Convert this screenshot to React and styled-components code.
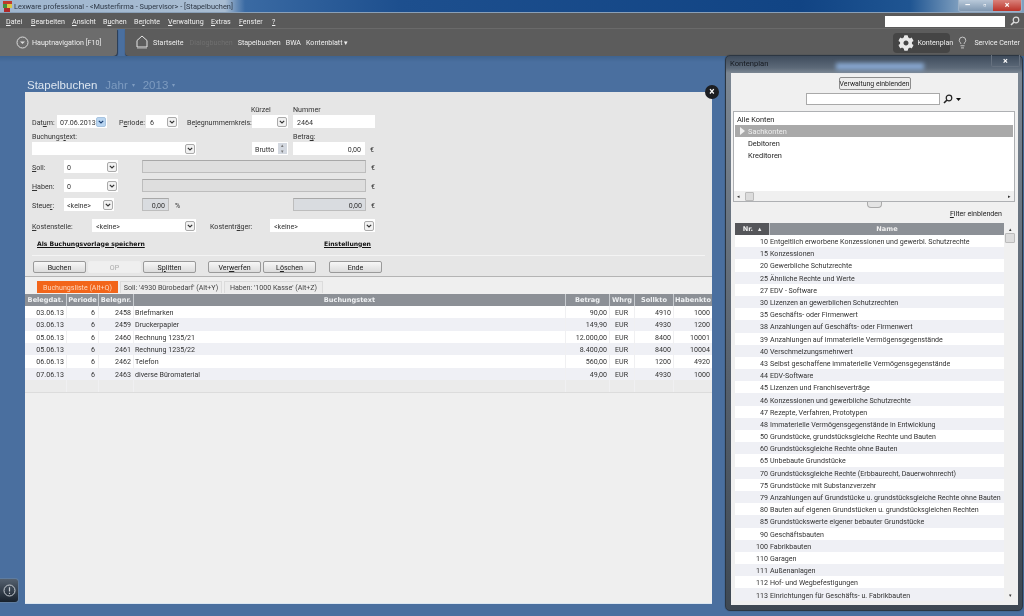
import React from "react";
import styled, { createGlobalStyle } from "styled-components";
import { Lightbulb } from "lucide-react";
import { FaCog } from "react-icons/fa";

const Global = createGlobalStyle`
  html, body { margin: 0; padding: 0; background: #4a6f9f; }
  body { font-family: Roboto, "Liberation Sans", Arial, sans-serif; font-size: 7.1px; color: #2b2b2b; }
  * { box-sizing: border-box; }
  u { text-decoration-thickness: 1px; text-underline-offset: 1px; }
`;

const Page = styled.div`
  position: relative; width: 1024px; height: 616px; overflow: hidden;
  display: flex; flex-direction: column; background: #4a6f9f; filter: blur(0.25px);
`;

/* ---------- Title bar ---------- */
const TitleBar = styled.div`
  height: 13px; flex: none; display: flex; align-items: center; padding-left: 3px; gap: 2px;
  background: linear-gradient(90deg, #9fb6cf 0, #a9bdd2 225px, #3a6aa3 245px, #1d4f8e 400px, #114484 800px, #1f5592 910px, #7f9fbf 960px);
  border-bottom: 1px solid #8aa0b8;
  font-size: 7.4px; color: #2d3745;
`;
const WindowControls = styled.div`
  margin-left: auto; margin-right: 2px; align-self: flex-start; width: 64px; height: 12px; display: flex;
  border-radius: 0 0 3px 3px; overflow: hidden; border: 1px solid #9db2c8; border-top: 0;
`;
const Ctl = styled.div`
  flex: ${p => p.$grow || 1}; display: flex; align-items: center; justify-content: center;
  background: ${p => p.$red ? "linear-gradient(#d9827b,#bb3228)" : "linear-gradient(#b9c9da,#7f97b0)"};
  color: #fff; font-size: 9px; font-weight: bold; line-height: 1;
`;

/* ---------- Menu ---------- */
const MenuBar = styled.div`
  height: 16px; flex: none; display: flex; align-items: center; padding: 1px 0 0 6px;
  background: #5a5a5a; color: #efefef; border-bottom: 1px solid #6a6a6a; position: relative;
`;
const MenuItem = styled.span`
  width: ${p => p.$w}px; flex: none; white-space: nowrap;
`;
const MenuSearch = styled.div`
  margin-left: auto; display: flex; align-items: center; gap: 5px; padding-right: 4px;
`;
const MenuSearchBox = styled.div`
  width: 120px; height: 11px; background: #fff;
`;

/* ---------- Toolbar ---------- */
const ToolBar = styled.div`
  height: 27px; flex: none; display: flex; gap: 8px; color: #eee; background: #4a6f9f;
`;
const NavPill = styled.div`
  width: 117px; display: flex; align-items: center; padding-left: 16px; gap: 3px;
  background: #6c6c6c; border-radius: 0 0 4px 0; box-shadow: 1px 1px 1px #2a3a50;
`;
const ToolStrip = styled.div`
  flex: 1; display: flex; align-items: center; padding-left: 11px; background: #5c5c5c;
  border-radius: 0 0 0 4px; box-shadow: 0 1px 1px #2a3a50;
`;
const ToolLink = styled.span`
  margin-left: ${p => p.$ml || 0}px; white-space: nowrap; color: ${p => p.$muted ? "#6f6f6f" : "#eee"};
`;
const KontenplanBtn = styled.div`
  margin-left: auto; width: 57px; height: 20px; display: flex; align-items: center; gap: 3px; padding-left: 5px; flex: none;
  background: #454545; border-radius: 4px; white-space: nowrap;
  svg { flex: none; }
`;
const ServiceLink = styled.div`
  display: flex; align-items: center; gap: 5px; margin: 0 4px 0 6px; white-space: nowrap;
  svg { flex: none; }
`;

/* ---------- Desktop ---------- */
const Desktop = styled.div`
  position: relative; flex: 1; padding: 21px 0 0 25px;
  background: linear-gradient(#3f638f 0, #4a6f9f 6px);
`;
const Heading = styled.div`
  height: 15px; padding-left: 2px; display: flex; align-items: center; gap: 8px;
  font-family: "Liberation Sans", Arial, sans-serif; font-size: 11.5px; color: #dde6f0;
`;
const HeadingMuted = styled.span`
  color: #7e9cc0; font-size: 11.5px; display: flex; gap: 4px; align-items: center;
`;
const Caret = styled.span`
  font-size: 6px;
`;
const Panel = styled.div`
  position: relative; width: 687px; height: 512px; background: #efefef;
  border-radius: 0 7px 0 0; border-bottom: 1px solid #dbe6f1;
  display: flex; flex-direction: column;
`;
const CloseRound = styled.div`
  position: absolute; top: -7px; right: -7px; width: 14px; height: 14px; border-radius: 50%;
  background: #1c1e22; color: #fff; font-size: 10px; font-weight: bold;
  display: flex; align-items: center; justify-content: center; line-height: 1;
`;

const Form = styled.div`
  background: #e6e6e6; padding: 11px 0 0 7px; height: 185px; border-radius: 0 7px 0 0;
  border-bottom: 1px solid #b4b4b4; flex: none;
`;
const Row = styled.div`
  display: flex; align-items: center; height: ${p => p.$h || 13}px; margin-top: ${p => p.$mt || 0}px;
`;
const Label = styled.span`
  flex: none; width: ${p => p.$w}px; margin-left: ${p => p.$ml || 0}px; padding-top: 1px; white-space: nowrap; color: #333;
`;
const InputBox = styled.div`
  flex: none; width: ${p => p.$w}px; height: 13px; margin-left: ${p => p.$ml || 0}px;
  display: flex; align-items: center; padding: ${p => p.$right ? "1px 3px 0 0" : "1px 0 0 3px"};
  justify-content: ${p => p.$right ? "flex-end" : "flex-start"};
  background: ${p => p.$gray ? (p.$blue ? "#d9dce0" : "#dedede") : "#fff"};
  border: 1px solid ${p => p.$gray ? "#bdbdbd" : "transparent"};
  border-top-color: ${p => p.$gray ? "#a8a8a8" : "transparent"};
  color: #333;
`;
const SelectBox = styled(InputBox)`
  justify-content: space-between; padding: 0 1px 0 ${p => p.$pad || 3}px; background: #fff; border: 0;
  span:first-child { padding-top: 1px; }
`;
const ArrowBtn = styled.span`
  flex: none; width: 10px; height: 10px; display: flex; align-items: center; justify-content: center;
  border: 1px solid ${p => p.$blue ? "#a8c4e0" : "#aaa"}; border-radius: 2px;
  background: ${p => p.$blue ? "#b9d5f0" : "#f1f1f1"};
`;
const Spinner = styled.span`
  flex: none; width: 9px; height: 11px; background: #d3d8e0; color: #777; font-size: 5px; line-height: 5.5px; text-align: center;
`;
const Currency = styled.span`
  flex: none; margin-left: ${p => p.$ml || 5}px; padding-top: 1px; color: #333; width: 6px;
`;
const LinkText = styled.span`
  flex: none; font-weight: bold; text-decoration: underline; color: #111; white-space: nowrap;
  font-family: "DejaVu Sans", sans-serif; font-size: 6.1px; margin-left: ${p => p.$ml || 0}px; width: ${p => p.$w}px;
`;
const Separator = styled.div`
  height: 1px; margin: 6px 7px 0 0; background: #f4f4f4;
`;
const ButtonRow = styled.div`
  display: flex; height: 12px; margin-top: 5px; padding-left: 1px;
`;
const Button = styled.div`
  flex: none; width: 53px; height: 12px; margin-left: ${p => p.$ml || 0}px; display: flex; align-items: center; justify-content: center;
  border: 1px solid ${p => p.$off ? "#eee" : "#9a9a9a"}; border-radius: 2px;
  background: ${p => p.$off ? "#efefef" : "linear-gradient(#f7f7f7,#dcdcdc)"};
  color: ${p => p.$off ? "#aaa" : "#222"};
`;

const Tabs = styled.div`
  display: flex; height: 12px; margin-top: 4px; padding-left: 12px; gap: 2px; flex: none;
`;
const Tab = styled.div`
  flex: none; width: ${p => p.$w}px; display: flex; align-items: center; justify-content: center; white-space: nowrap;
  background: ${p => p.$active ? "#f2651a" : "#ececec"}; color: ${p => p.$active ? "#ffd9bf" : "#444"};
  border: 1px solid ${p => p.$active ? "#f2651a" : "#dcdcdc"}; border-bottom: 0;
`;
const cols = "41px 32px 35px 432px 44px 25px 39px 39px";
const HeaderRow = styled.div`
  display: grid; grid-template-columns: ${cols}; height: 12px; margin-top: 1px; flex: none; background: #8c9096;
`;
const HeaderCell = styled.div`
  display: flex; align-items: center; justify-content: center; color: #eef0f2; font-weight: bold; white-space: nowrap;
  font-family: "DejaVu Sans", sans-serif; font-size: 6.6px; border-left: ${p => p.$first ? 0 : "1px solid #c8ccd0"};
  overflow: hidden;
`;
const DataRow = styled.div`
  display: grid; grid-template-columns: ${cols}; height: 12.33px; flex: none; background: ${p => p.$odd ? "#eff0f5" : "#fff"};
`;
const EmptyRow = styled(DataRow)`
  height: 13px; background: #ebebeb; border-bottom: 1px solid #dcdcdc;
`;
const Cell = styled.div`
  display: flex; align-items: center; white-space: nowrap; overflow: hidden; color: #333;
  justify-content: ${p => p.$left ? "flex-start" : "flex-end"};
  padding: ${p => p.$left ? `1px 0 0 ${p.$pad ?? 1}px` : `1px ${p.$pad ?? 2}px 0 0`};
  border-left: ${p => p.$first ? 0 : "1px solid #f0f0f2"};
`;

/* ---------- Kontenplan window ---------- */
const FloatWindow = styled.div`
  position: absolute; left: 725px; top: 55px; width: 298px; height: 556px; padding: 17px 4px 5px 5px;
  background: linear-gradient(#3f4c5c 0, #5d6a79 12px, #7c8793 17px, #555f6b 60%, #3e4853 100%);
  border: 1px solid #2c3642; border-radius: 5px; display: flex; box-shadow: 0 0 1px #1d2a38;
`;
const WinTitle = styled.div`
  position: absolute; left: 4px; top: 3px; font-size: 7.6px; color: #15191f;
`;
const WinGlow = styled.div`
  position: absolute; left: 110px; top: 7px; width: 88px; height: 7px; background: #86a6cf; filter: blur(2px);
`;
const WinClose = styled.div`
  position: absolute; right: 2px; top: -1px; width: 29px; height: 12px; border: 1px solid #66717f; border-top: 0; border-radius: 0 0 2px 2px;
  color: #fff; font-size: 9px; font-weight: bold; display: flex; align-items: center; justify-content: center;
`;
const WinBody = styled.div`
  flex: 1; background: #f0f0f0; display: flex; flex-direction: column; align-items: center; padding-top: 4px; min-width: 0;
`;
const MgmtButton = styled.div`
  width: 72px; height: 13px; display: flex; align-items: center; justify-content: center; flex: none; white-space: nowrap;
  border: 1px solid #8d8d8d; border-radius: 2px; background: #ececec; color: #222; font-size: 6.9px;
`;
const SearchRow = styled.div`
  display: flex; align-items: center; gap: 3px; margin-top: 3px; height: 12px; margin-left: 18px; flex: none;
`;
const SearchField = styled.div`
  width: 134px; height: 12px; background: #fff; border: 1px solid #a9a9a9;
`;
const Tree = styled.div`
  align-self: stretch; margin: 6px 3px 0 2px; height: 91px; flex: none; background: #fff; border: 1px solid #aeb0b3;
  display: flex; flex-direction: column; padding-top: 1px; color: #222; font-size: 7.4px;
`;
const TreeRow = styled.div`
  height: 12.2px; flex: none; display: flex; align-items: center; gap: 4px; margin: 0 1px;
  padding-left: ${p => p.$root ? 2 : 13}px;
  background: ${p => p.$selected ? "#a9a9a9" : "transparent"}; color: ${p => p.$selected ? "#eee" : "#222"};
  position: relative;
`;
const TreeArrow = styled.span`
  position: absolute; left: 5px; top: 2px; width: 0; height: 0; border-left: 5px solid #f0f0f0;
  border-top: 4px solid transparent; border-bottom: 4px solid transparent;
`;
const HScroll = styled.div`
  margin-top: auto; height: 10px; background: #f0f0f0; display: flex; align-items: center; padding: 0 3px;
  justify-content: space-between; color: #333; font-size: 5px;
`;
const HThumb = styled.span`
  width: 9px; height: 9px; background: #dcdcdc; border: 1px solid #bbb; border-radius: 1px; margin-left: 5px; margin-right: auto;
`;
const Grip = styled.div`
  width: 15px; height: 6px; border: 1px solid #aaa; border-top: 0; border-radius: 0 0 4px 4px; background: #e4e4e4; flex: none;
`;
const FilterRow = styled.div`
  align-self: stretch; height: 10px; margin-top: 1px; padding-right: 16px; text-align: right; flex: none; color: #222; line-height: 10px;
`;
const ListWrap = styled.div`
  align-self: stretch; margin: 4px 3px 0 4px; display: flex; flex: 1; min-height: 0;
`;
const List = styled.div`
  width: 269px; flex: none; display: flex; flex-direction: column;
`;
const ListHead = styled.div`
  display: grid; grid-template-columns: 34px 1fr; height: 12px; flex: none;
  color: #eee; font-family: "DejaVu Sans", sans-serif; font-weight: bold; font-size: 6.6px;
`;
const ListHeadCell = styled.div`
  display: flex; align-items: center; justify-content: center; gap: 5px; background: ${p => p.$dark ? "#55565a" : "#8c9096"};
  border-left: ${p => p.$dark ? 0 : "1px solid #c6c8cc"};
`;
const ListRow = styled.div`
  display: grid; grid-template-columns: 34px 1fr; height: 12.19px; flex: none; align-items: center; padding-top: 1px;
  background: ${p => p.$odd ? "#eff0f5" : "#fff"}; color: #333; white-space: nowrap;
`;
const ListNr = styled.span`
  text-align: right; padding-right: 1px;
`;
const ListName = styled.span`
  padding-left: 1px;
`;
const VScroll = styled.div`
  width: 12px; flex: none; background: #f0f0f0; display: flex; flex-direction: column; align-items: center; padding-top: 2px; color: #333; font-size: 5px; line-height: 8px;
`;
const VThumb = styled.span`
  width: 10px; height: 10px; background: #dcdcdc; border: 1px solid #bbb; border-radius: 1px;
`;
const VEnd = styled.span`
  margin-top: auto; margin-bottom: 6px;
`;
const InfoTab = styled.div`
  position: absolute; left: 0; top: 522px; width: 19px; height: 25px;
  background: linear-gradient(#54606e, #17202b); border: 1px solid #5f7c9f; border-left: 0; border-radius: 0 4px 4px 0;
  display: flex; align-items: center; justify-content: center;
`;

/* ---------- Drawings ---------- */
const Chev = ({ color = "#333" }) => (
  <svg width="6" height="4" viewBox="0 0 6 4"><path d="M.8.8 3 3l2.2-2.2" fill="none" stroke={color} strokeWidth="1.2" /></svg>
);
const SolidCaret = () => (
  <svg width="5" height="3" viewBox="0 0 5 3"><path d="M0 0h5L2.5 3z" fill="#111" /></svg>
);
const Logo = () => (
  <svg width="9" height="11" viewBox="0 0 9 11">
    <rect width="9" height="3" fill="#c0392b" /><rect y="3" width="4" height="4" fill="#3f8f3f" />
    <rect x="4" y="3" width="5" height="4" fill="#d8c84a" /><rect x="1" y="7" width="6" height="4" fill="#b02a2a" />
  </svg>
);
const CircleDown = () => (
  <svg width="13" height="13" viewBox="0 0 13 13">
    <circle cx="6.5" cy="6.5" r="5.5" fill="none" stroke="#ddd" strokeWidth="1" />
    <path d="M4 5.5h5L6.5 8z" fill="#ddd" />
  </svg>
);
const Home = () => (
  <svg width="12" height="15" viewBox="0 0 12 15">
    <path d="M1 12V5.5L6 1l5 4.5V12z" fill="none" stroke="#e6e6e6" strokeWidth="1" />
    <path d="M1 13.5h10" stroke="#8a8a8a" strokeWidth="1" />
  </svg>
);
const Loupe = ({ color = "#222" }) => (
  <svg width="10" height="10" viewBox="0 0 10 10">
    <circle cx="6" cy="4" r="2.8" fill="none" stroke={color} strokeWidth="1.2" />
    <path d="M4 6 1 9" stroke={color} strokeWidth="1.6" />
  </svg>
);
const InfoIcon = () => (
  <svg width="13" height="13" viewBox="0 0 13 13">
    <circle cx="6.5" cy="6.5" r="5.5" fill="none" stroke="#c9ced4" strokeWidth="1" />
    <path d="M6.5 3.2v4.4M6.5 8.8v1.2" stroke="#c9ced4" strokeWidth="1.2" />
  </svg>
);

const Select = ({ w, ml, pad, blue, children }) => (
  <SelectBox $w={w} $ml={ml} $pad={pad}>
    <span>{children}</span>
    <ArrowBtn $blue={blue}><Chev color={blue ? "#1a3f73" : "#333"} /></ArrowBtn>
  </SelectBox>
);

const menu = [
  [<><u>D</u>atei</>, 25], [<><u>B</u>earbeiten</>, 41], [<><u>A</u>nsicht</>, 31], [<>B<u>u</u>chen</>, 31],
  [<>Be<u>r</u>ichte</>, 34], [<><u>V</u>erwaltung</>, 43], [<><u>E</u>xtras</>, 28], [<><u>F</u>enster</>, 33], [<><u>?</u></>, 10],
];
const bookings = [
  ["03.06.13", "6", "2458", "Briefmarken", "90,00", "4910", "1000"],
  ["03.06.13", "6", "2459", "Druckerpapier", "149,90", "4930", "1200"],
  ["05.06.13", "6", "2460", "Rechnung 1235/21", "12.000,00", "8400", "10001"],
  ["05.06.13", "6", "2461", "Rechnung 1235/22", "8.400,00", "8400", "10004"],
  ["06.06.13", "6", "2462", "Telefon", "560,00", "1200", "4920"],
  ["07.06.13", "6", "2463", "diverse Büromaterial", "49,00", "4930", "1000"],
];
const heads = ["Belegdat.", "Periode", "Belegnr.", "Buchungstext", "Betrag", "Whrg", "Sollkto", "Habenkto"];
const accounts = [
  [10, "Entgeltlich erworbene Konzessionen und gewerbl. Schutzrechte"], [15, "Konzessionen"],
  [20, "Gewerbliche Schutzrechte"], [25, "Ähnliche Rechte und Werte"], [27, "EDV - Software"],
  [30, "Lizenzen an gewerblichen Schutzrechten"], [35, "Geschäfts- oder Firmenwert"],
  [38, "Anzahlungen auf Geschäfts- oder Firmenwert"], [39, "Anzahlungen auf immaterielle Vermögensgegenstände"],
  [40, "Verschmelzungsmehrwert"], [43, "Selbst geschaffene immaterielle Vermögensgegenstände"], [44, "EDV-Software"],
  [45, "Lizenzen und Franchiseverträge"], [46, "Konzessionen und gewerbliche Schutzrechte"],
  [47, "Rezepte, Verfahren, Prototypen"], [48, "Immaterielle Vermögensgegenstände in Entwicklung"],
  [50, "Grundstücke, grundstücksgleiche Rechte und Bauten"], [60, "Grundstücksgleiche Rechte ohne Bauten"],
  [65, "Unbebaute Grundstücke"], [70, "Grundstücksgleiche Rechte (Erbbaurecht, Dauerwohnrecht)"],
  [75, "Grundstücke mit Substanzverzehr"], [79, "Anzahlungen auf Grundstücke u. grundstücksgleiche Rechte ohne Bauten"],
  [80, "Bauten auf eigenen Grundstücken u. grundstücksgleichen Rechten"], [85, "Grundstückswerte eigener bebauter Grundstücke"],
  [90, "Geschäftsbauten"], [100, "Fabrikbauten"], [110, "Garagen"], [111, "Außenanlagen"],
  [112, "Hof- und Wegbefestigungen"], [113, "Einrichtungen für Geschäfts- u. Fabrikbauten"],
];

export default function App() {
  return (
    <Page>
      <Global />
      <TitleBar>
        <Logo />
        <span>Lexware professional - &lt;Musterfirma - Supervisor&gt; - [Stapelbuchen]</span>
        <WindowControls>
          <Ctl>–</Ctl><Ctl>▫</Ctl><Ctl $red $grow={1.6}>×</Ctl>
        </WindowControls>
      </TitleBar>
      <MenuBar>
        {menu.map(([t, w], i) => <MenuItem key={i} $w={w}>{t}</MenuItem>)}
        <MenuSearch><MenuSearchBox /><Loupe color="#ddd" /></MenuSearch>
      </MenuBar>
      <ToolBar>
        <NavPill><CircleDown /><span>Hauptnavigation [F10]</span></NavPill>
        <ToolStrip>
          <Home />
          <ToolLink $ml={5}>Startseite</ToolLink>
          <ToolLink $ml={6} $muted>Dialogbuchen</ToolLink>
          <ToolLink $ml={5}>Stapelbuchen</ToolLink>
          <ToolLink $ml={5}>BWA</ToolLink>
          <ToolLink $ml={5}>Kontenblatt ▾</ToolLink>
          <KontenplanBtn><FaCog size={16} color="#e8e8e8" /><span>Kontenplan</span></KontenplanBtn>
          <ServiceLink><Lightbulb size={13} color="#ddd" strokeWidth={1.5} /><span>Service Center</span></ServiceLink>
        </ToolStrip>
      </ToolBar>

      <Desktop>
        <Heading>
          <span>Stapelbuchen</span>
          <HeadingMuted>Jahr <Caret>▾</Caret></HeadingMuted>
          <HeadingMuted>2013 <Caret>▾</Caret></HeadingMuted>
        </Heading>
        <Panel>
          <CloseRound>×</CloseRound>
          <Form>
            <Row $h={12}>
              <Label $w={42} $ml={219}>Kürzel</Label>
              <Label $w={60}>Nummer</Label>
            </Row>
            <Row>
              <Label $w={25}>Dat<u>u</u>m:</Label>
              <Select w={50} blue>07.06.2013</Select>
              <Label $w={27} $ml={12}>P<u>e</u>riode:</Label>
              <Select w={32} pad={4}>6</Select>
              <Label $w={65} $ml={9}>Be<u>l</u>egnummernkreis:</Label>
              <Select w={36} />
              <InputBox $w={82} $ml={5}>2464</InputBox>
            </Row>
            <Row $h={12} $mt={2}>
              <Label $w={261}>Buchungs<u>t</u>ext:</Label>
              <Label $w={60}>Betra<u>g</u>:</Label>
            </Row>
            <Row>
              <Select w={164} />
              <SelectBox $w={36} $ml={56} $pad={3}><span>Brutto</span><Spinner>▴<br />▾</Spinner></SelectBox>
              <InputBox $w={72} $ml={5} $right>0,00</InputBox>
              <Currency>€</Currency>
            </Row>
            <Row $mt={5}>
              <Label $w={32}><u>S</u>oll:</Label>
              <Select w={54}>0</Select>
              <InputBox $w={224} $ml={24} $gray />
              <Currency>€</Currency>
            </Row>
            <Row $mt={6}>
              <Label $w={32}><u>H</u>aben:</Label>
              <Select w={54}>0</Select>
              <InputBox $w={224} $ml={24} $gray />
              <Currency>€</Currency>
            </Row>
            <Row $mt={6}>
              <Label $w={32}>Steue<u>r</u>:</Label>
              <Select w={50}>&lt;keine&gt;</Select>
              <InputBox $w={27} $ml={28} $gray $blue $right>0,00</InputBox>
              <Label $w={118} $ml={6}>%</Label>
              <InputBox $w={73} $gray $blue $right>0,00</InputBox>
              <Currency>€</Currency>
            </Row>
            <Row $mt={8}>
              <Label $w={60}><u>K</u>ostenstelle:</Label>
              <Select w={104} pad={4}>&lt;keine&gt;</Select>
              <Label $w={60} $ml={14}>Kostentr<u>ä</u>ger:</Label>
              <Select w={105} pad={4}>&lt;keine&gt;</Select>
            </Row>
            <Row $h={12} $mt={5}>
              <LinkText $ml={5} $w={287}>Als Buchungsvorlage speichern</LinkText>
              <LinkText $w={60}>Einstellungen</LinkText>
            </Row>
            <Separator />
            <ButtonRow>
              <Button>Buchen</Button>
              <Button $ml={2} $off>OP</Button>
              <Button $ml={2}>S<u>p</u>litten</Button>
              <Button $ml={12}>Ver<u>w</u>erfen</Button>
              <Button $ml={2}>L<u>ö</u>schen</Button>
              <Button $ml={13}>Ende</Button>
            </ButtonRow>
          </Form>
          <Tabs>
            <Tab $active $w={81}>Buchungsliste (Alt+Q)</Tab>
            <Tab $w={102}>Soll: '4930 Bürobedarf' (Alt+Y)</Tab>
            <Tab $w={99}>Haben: '1000 Kasse' (Alt+Z)</Tab>
          </Tabs>
          <HeaderRow>
            {heads.map((h, i) => <HeaderCell key={h} $first={i === 0}>{h}</HeaderCell>)}
          </HeaderRow>
          {bookings.map((b, i) => (
            <DataRow key={b[2]} $odd={i % 2 === 1}>
              <Cell $first>{b[0]}</Cell>
              <Cell $pad={3}>{b[1]}</Cell>
              <Cell>{b[2]}</Cell>
              <Cell $left>{b[3]}</Cell>
              <Cell>{b[4]}</Cell>
              <Cell $left $pad={5}>EUR</Cell>
              <Cell>{b[5]}</Cell>
              <Cell>{b[6]}</Cell>
            </DataRow>
          ))}
          <EmptyRow>
            {heads.map((h, i) => <Cell key={h} $first={i === 0} />)}
          </EmptyRow>
        </Panel>
        <InfoTab><InfoIcon /></InfoTab>
      </Desktop>

      <FloatWindow>
        <WinTitle>Kontenplan</WinTitle>
        <WinGlow />
        <WinClose>×</WinClose>
        <WinBody>
          <MgmtButton>Verwaltung einblenden</MgmtButton>
          <SearchRow><SearchField /><Loupe /><SolidCaret /></SearchRow>
          <Tree>
            <TreeRow $root>Alle Konten</TreeRow>
            <TreeRow $selected><TreeArrow />Sachkonten</TreeRow>
            <TreeRow>Debitoren</TreeRow>
            <TreeRow>Kreditoren</TreeRow>
            <HScroll><span>◂</span><HThumb /><span>▸</span></HScroll>
          </Tree>
          <Grip />
          <FilterRow><u>F</u>ilter einblenden</FilterRow>
          <ListWrap>
            <List>
              <ListHead>
                <ListHeadCell $dark>Nr. <span>▴</span></ListHeadCell>
                <ListHeadCell>Name</ListHeadCell>
              </ListHead>
              {accounts.map(([n, t], i) => (
                <ListRow key={n} $odd={i % 2 === 1}><ListNr>{n}</ListNr><ListName>{t}</ListName></ListRow>
              ))}
            </List>
            <VScroll><span>▴</span><VThumb /><VEnd>▾</VEnd></VScroll>
          </ListWrap>
        </WinBody>
      </FloatWindow>
    </Page>
  );
}
